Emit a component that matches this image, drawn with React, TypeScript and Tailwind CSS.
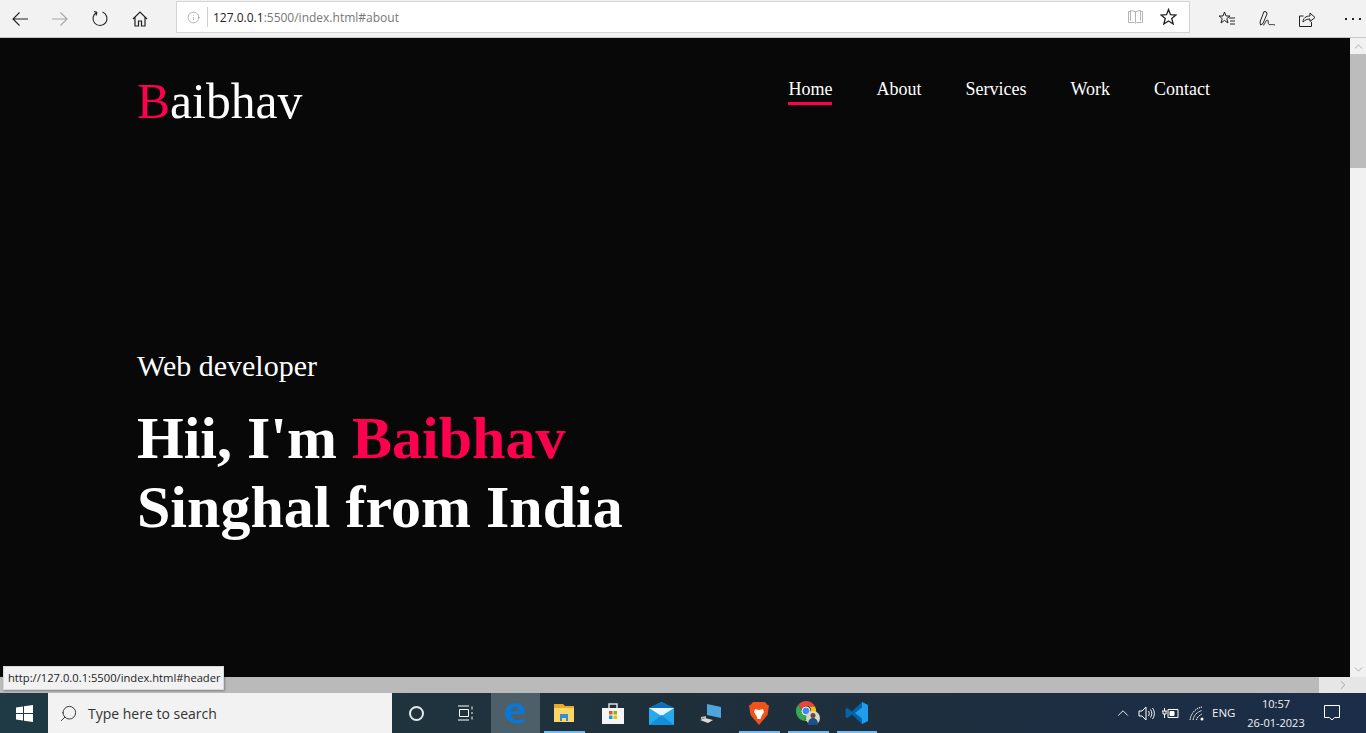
import { ChevronDown, ChevronRight, ChevronUp, Info, Search } from "lucide-react";

const navLinks = ["Home", "About", "Services", "Work", "Contact"];

function Toolbar() {
	return (
		<div className="h-[38px] shrink-0 bg-[#f2f2f2] border-b border-[#c8c8c8] flex items-center text-[#222]">
			<div className="w-[176px] shrink-0 flex items-center pl-[10px] gap-[20px]">
				<svg width="20" height="20" viewBox="0 0 20 20" fill="none" stroke="currentColor" strokeWidth="1.100">
					<path d="M3 10h15 M9.500 3.500L3 10l6.500 6.500" />
				</svg>
				<svg width="20" height="20" viewBox="0 0 20 20" fill="none" stroke="#a6a6a6" strokeWidth="1.100">
					<path d="M2 10h15 M10.500 3.500L17 10l-6.500 6.500" />
				</svg>
				<svg width="20" height="20" viewBox="0 0 20 20" fill="none" stroke="currentColor" strokeWidth="1.100">
					<path d="M7 3.200A7 7 0 1 0 12.500 3 M7 3.200L4 2.500 M7 3.200L6 6.500" />
				</svg>
				<svg width="20" height="20" viewBox="0 0 20 20" fill="none" stroke="currentColor" strokeWidth="1.200">
					<path d="M3 10l7-7 7 7 M5 8.500V17h3.500v-5h3v5H15V8.500" />
				</svg>
			</div>
			<div className="w-[1014px] shrink-0 h-[32px] mb-[4px] bg-white border border-[#d4d4d4] flex items-center">
				<Info size={13} strokeWidth={1} className="ml-[10px] mt-[1px] text-[#777]" />
				<div className="w-px h-[20px] bg-[#cfcfcf] ml-[7px]" />
				<span className="ml-[5px] mt-[2px] text-[12px] text-[#777] font-['Open_Sans',sans-serif]">
					<span className="text-[#222]">127.0.0.1</span>:5500/index.html#about
				</span>
				<div className="ml-auto mr-[12px] flex items-center gap-[16px]">
					<svg width="17" height="16" viewBox="0 0 17 16" fill="none" stroke="#b4b4b4">
						<path d="M1.500 2.500h2v-1l5 1 5-1v1h2v11h-6l-1 1-1-1h-6z M8.500 2.500v11 M3.500 1.500v10 M13.500 1.500v10" />
					</svg>
					<svg width="17" height="17" viewBox="0 0 17 17" fill="none" stroke="#222" strokeWidth="1.300">
						<path d="M8.500 1.500l2 5.200 5.500.3-4.300 3.500 1.500 5.500-4.700-3-4.700 3 1.500-5.500L1 7l5.500-.3z" />
					</svg>
				</div>
			</div>
			<div className="flex-1 flex items-center pl-[28px] gap-[22px]">
				<svg width="18" height="18" viewBox="0 0 18 18" fill="none" stroke="#222" strokeWidth="1">
					<path d="M6.500 2l1.500 4h4l-3.200 2.600 1.200 4.400-3.500-2.600-3.500 2.600 1.200-4.400L1 6h4z M11 8h6 M12 11h5 M12 14h5" />
				</svg>
				<svg width="18" height="18" viewBox="0 0 18 18" fill="none" stroke="#222" strokeWidth="1">
					<path d="M2.500 15l-.500-3L6 1.500l2.500.500.500 2-4 9.500z M5 15.500c2-1 3-6 4.500-5.500s0 4 1.500 4.500 2-.500 6 .500" />
				</svg>
				<svg width="18" height="18" viewBox="0 0 18 18" fill="none" stroke="#222" strokeWidth="1">
					<path d="M1.500 6v10.500h12V12 M1.500 6h4 M5 12c0-4 3-6 7-6V3l5 4.500-5 4V9c-3 0-5 1-7 3z" />
				</svg>
				<div className="ml-[7px] flex gap-[5px]">
					<div className="w-[2px] h-[2px] bg-[#222]" />
					<div className="w-[2px] h-[2px] bg-[#222]" />
					<div className="w-[2px] h-[2px] bg-[#222]" />
				</div>
			</div>
		</div>
	);
}

function Page() {
	return (
		<main className="flex-1 min-w-0 bg-[#080808] text-white px-[137px] font-['Liberation_Serif',serif]">
			<header className="flex justify-between pt-[36px]">
				<div className="text-[49.600px] leading-[56px]">
					<span className="text-[#ff004f]">B</span>aibhav
				</div>
				<nav className="flex gap-[44px] pr-[3px] pt-[4px] text-[18px] leading-[22px]">
					{navLinks.map((link, i) => (
						<a key={link} className="relative h-[27px]">
							{link}
							{i === 0 && <span className="absolute left-0 bottom-0 w-full h-[3px] bg-[#ff004f]" />}
						</a>
					))}
				</nav>
			</header>
			<section className="pt-[220px]">
				<p className="text-[30px] leading-[32px]">Web developer</p>
				<h1 className="mt-[22px] text-[60px] leading-[69px] font-bold">
					Hii, I'm <span className="text-[#ff004f]">Baibhav</span>
					<br />
					Singhal from India
				</h1>
			</section>
		</main>
	);
}

function Scrollbars() {
	return (
		<div className="w-[16px] shrink-0 bg-[#f1f1f1] flex flex-col text-[#777]">
			<div className="h-[16px] flex items-center justify-center">
				<ChevronUp size={13} strokeWidth={1} />
			</div>
			<div className="h-[114px] bg-[#bcbcbc]" />
			<div className="mt-auto h-[16px] flex items-center justify-center">
				<ChevronDown size={13} strokeWidth={1} />
			</div>
		</div>
	);
}

function TaskIcon({ active, open, children }: { active?: boolean; open?: boolean; children: React.ReactNode }) {
	return (
		<div className={`w-[48.800px] h-full flex items-center justify-center relative ${active ? "bg-[#4d5f69]" : ""}`}>
			{children}
			{open && <div className="absolute bottom-0 left-[4px] right-[4px] h-[2px] bg-[#76b9ed]" />}
		</div>
	);
}

function Taskbar() {
	return (
		<div className="h-[40px] shrink-0 bg-gradient-to-r from-[#1f3a44] via-[#1f2f3a] to-[#1b2d48] flex items-center text-white font-['Open_Sans',sans-serif]">
			<div className="w-[48px] h-full flex items-center justify-center">
				<svg width="17" height="17" viewBox="0 0 17 17" fill="#fff">
					<path d="M0 2.500l7-1v6.500H0z M8 1.300l9-1.300v8H8z M0 9h7v6.500l-7-1z M8 9h9v8l-9-1.300z" />
				</svg>
			</div>
			<div className="w-[344px] h-full bg-[#f2f2f2] flex items-center text-[#333]">
				<Search size={19} strokeWidth={1.2} className="ml-[11px] -scale-x-100" />
				<span className="ml-[10px] text-[14px]">Type here to search</span>
			</div>
			<div className="w-[49px] h-full flex items-center justify-center">
				<div className="w-[15px] h-[15px] rounded-full border-2 border-[#e8e8e8]" />
			</div>
			<div className="w-[50px] h-full flex items-center justify-center">
				<svg width="18" height="16" viewBox="0 0 18 16" fill="none" stroke="#fff" strokeWidth="1">
					<path d="M1 1h11 M1 15h11 M2.500 4.500h9v7h-9z M15 1.500v3 M15 7v2 M15 11.500v3" />
				</svg>
			</div>
			<TaskIcon active>
				<svg width="22" height="22" viewBox="0 0 22 22">
					<path fill="#0a78d7" d="M11.500 1C17 1 21 5 21 12H7c.5 4 3 6 7 6 2.500 0 4.500-.6 6-1.600v3.800C18.500 21 16 21.500 13.500 21.500 6 21.500 1 17 1 11 1 6 5 1 11.500 1zM7 9h8c0-2.500-1.500-4-4-4S7.500 6.500 7 9z" />
				</svg>
			</TaskIcon>
			<TaskIcon open>
				<svg width="22" height="20" viewBox="0 0 22 20">
					<path fill="#e9a92b" d="M1 1h9l2 2h9v16H1z" />
					<path fill="#ffd768" d="M1 5h20v14H1z" />
					<path fill="#2f8fd8" d="M7 11h8v7h-2v-3H9v3H7z" />
				</svg>
			</TaskIcon>
			<TaskIcon>
				<svg width="24" height="24" viewBox="0 0 24 24">
					<path fill="none" stroke="#ddd" strokeWidth="1.500" d="M8 7V3h8v4" />
					<path fill="#f5f5f5" d="M1 7h22v16H1z" />
					<path fill="#f25022" d="M8 10h3.500v3.500H8z" />
					<path fill="#7fba00" d="M12.500 10H16v3.500h-3.500z" />
					<path fill="#00a4ef" d="M8 14.500h3.500V18H8z" />
					<path fill="#ffb900" d="M12.500 14.500H16V18h-3.500z" />
				</svg>
			</TaskIcon>
			<TaskIcon>
				<svg width="25" height="23" viewBox="0 0 25 23">
					<path fill="#29a8ea" d="M0 6L12.500 0 25 6v17H0z" />
					<path fill="#0e6db8" d="M0 6L12.500 0 25 6 12.500 13z" />
					<path fill="#e9f6ff" d="M0 6h25L12.500 14z" />
					<path fill="#1390dd" d="M0 23l12.500-10L25 23z" />
				</svg>
			</TaskIcon>
			<TaskIcon>
				<svg width="24" height="23" viewBox="0 0 24 23">
					<path fill="#4fa6da" d="M8 2l14 3v11L8 13z" />
					<path fill="#dadada" d="M1 18l5-2 8 2-5 3z" />
					<path fill="#bdbdbd" d="M2 15l5-1v2l-5 1z" />
				</svg>
			</TaskIcon>
			<TaskIcon open>
				<svg width="20" height="24" viewBox="0 0 20 24">
					<path fill="#f1511b" d="M4 1h12l2 2.500 2 1-1.500 9.500-8.500 10-8.500-10L0 4.500l2-1z" />
					<path fill="#fff" d="M6 8l4 1 4-1 1 3-2.500 4-1 3h-3l-1-3L5 11z" />
				</svg>
			</TaskIcon>
			<TaskIcon open>
				<svg width="26" height="26" viewBox="0 0 26 26">
					<path fill="#e8453c" d="M11 1a10 10 0 0 1 9 5.500H11a4.500 4.500 0 0 0-4.300 3.400L3.500 4.500A10 10 0 0 1 11 1z" />
					<path fill="#34a853" d="M3.500 4.500l4.600 8a4.500 4.500 0 0 0 4.500 2.500L9.500 21A10 10 0 0 1 3.500 4.500z" />
					<path fill="#fbbc05" d="M20 6.500a10 10 0 0 1-10 14.500l4-7a4.500 4.500 0 0 0 0-7.500z" />
					<circle cx="11" cy="11" r="4" fill="#4285f4" stroke="#fff" />
					<circle cx="18" cy="18" r="7" fill="#d8d8c8" />
					<path fill="#1b4f8a" d="M13 25c0-5 2-7 5-7s5 2 5 7z" />
					<circle cx="18" cy="15.500" r="2.500" fill="#6b4a32" />
				</svg>
			</TaskIcon>
			<TaskIcon open>
				<svg width="24" height="24" viewBox="0 0 24 24">
					<path fill="#0065a9" d="M17 1l6 3v16l-6 3L7 13.500 2.500 17 .500 16v-8l2-1L7 10.500z" />
					<path fill="#1f9cf0" d="M17 1l6 3v16l-6 3zM17 6.500L10 12l7 5.500z" />
				</svg>
			</TaskIcon>
			<div className="ml-auto h-full flex items-center text-[#f2f2f2]">
				<ChevronUp size={18} strokeWidth={1.300} />
				<svg width="17" height="15" viewBox="0 0 17 15" fill="none" stroke="#fff" className="ml-[6px]">
					<path d="M1 5h3l4-4v13l-4-4H1z M10.500 5c1 1.500 1 3.500 0 5 M12.500 3.500c1.800 2.500 1.800 5.500 0 8 M14.500 2c2.500 3.500 2.500 7.500 0 11" />
				</svg>
				<svg width="17" height="12" viewBox="0 0 17 12" fill="none" stroke="#fff" className="ml-[7px]">
					<path d="M6 2.500h10v8H6z" />
					<path d="M8 4.500h4v4H8z" fill="#fff" />
					<path d="M0 4h5 M2.500 1v3 M2.500 7v4 M1 4v3h3V4" />
				</svg>
				<svg width="16" height="16" viewBox="0 0 16 16" fill="none" stroke="#fff" className="ml-[10px]">
					<path strokeDasharray="1.500 .700" d="M1 15C2 8 7 3 13 2 M4 15C5 10 8 7 13 5.500 M7.500 15C8 12.500 10 10.500 13 9" />
					<circle cx="13" cy="14" r="1.500" fill="#fff" stroke="none" />
				</svg>
				<span className="ml-[7px] text-[11.500px] w-[26px]">ENG</span>
				<div className="ml-[5px] w-[66px] text-center text-[11px] leading-[19px] whitespace-nowrap">
					<div>10:57</div>
					<div>26-01-2023</div>
				</div>
				<svg width="17" height="16" viewBox="0 0 17 16" fill="none" stroke="#fff" className="ml-[15px] mr-[25px]">
					<path d="M.500.500h15v12h-5l-2.500 2.500-2.500-2.500h-5z" />
				</svg>
			</div>
		</div>
	);
}

export default function App() {
	return (
		<div className="relative h-[733px] w-[1366px] overflow-hidden flex flex-col">
			<Toolbar />
			<div className="flex-1 min-h-0 flex">
				<Page />
				<Scrollbars />
			</div>
			<div className="h-[16px] shrink-0 bg-[#bababa] flex justify-end">
				<div className="w-[47px] bg-[#e6e6e6] flex items-center justify-center text-[#777]">
					<ChevronRight size={14} strokeWidth={1} />
				</div>
			</div>
			<Taskbar />
			<div className="absolute left-[3px] top-[666px] h-[24px] w-[221px] bg-[#f2f2f2] border border-[#d8d8d8] shadow-[1px_1px_2px_rgba(0,0,0,0.3)] flex items-center pl-[4px] text-[11.200px] text-[#222] font-['Open_Sans',sans-serif] whitespace-nowrap">
				http://127.0.0.1:5500/index.html#header
			</div>
		</div>
	);
}
